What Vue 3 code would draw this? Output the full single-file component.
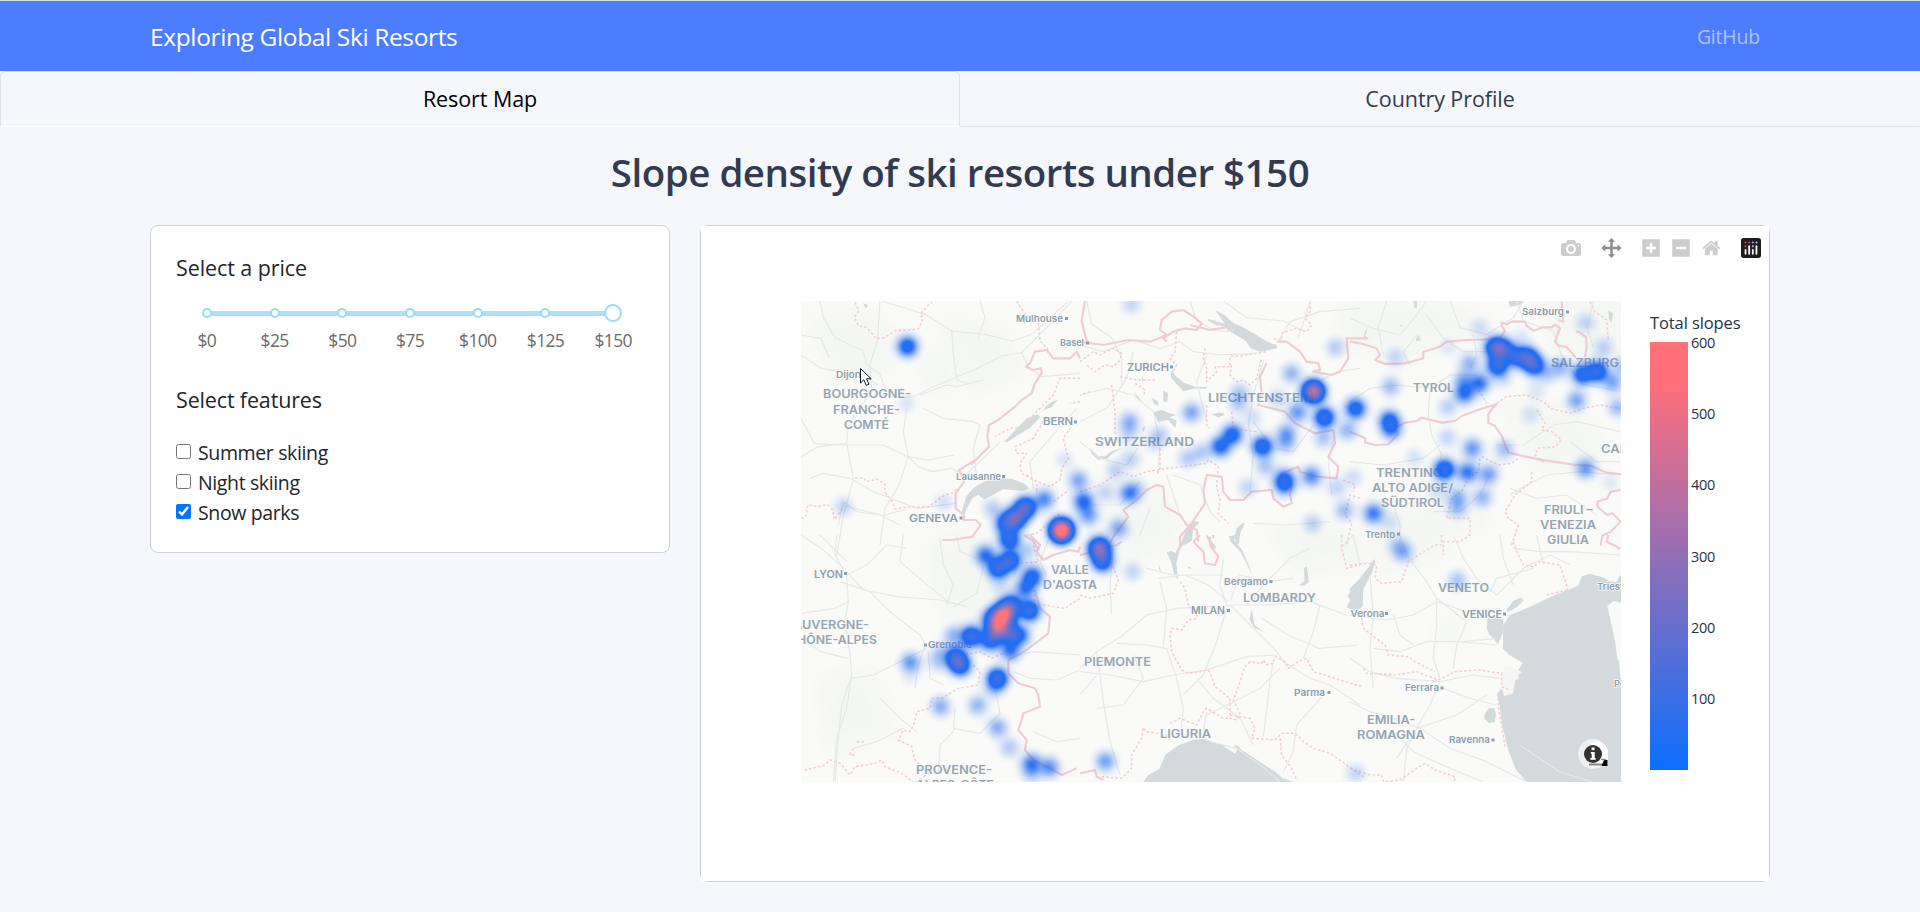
<script setup>
import { ref, onMounted } from 'vue'

const marks = ['$0', '$25', '$50', '$75', '$100', '$125', '$150']
const features = [
  { name: 'Summer skiing', on: false },
  { name: 'Night skiing', on: false },
  { name: 'Snow parks', on: true }
]
const ticks = [600, 500, 400, 300, 200, 100]

// [text, left, baseline, width]
const regions = [
  ['BOURGOGNE-', 22, 97, 88], ['FRANCHE-', 32, 112.5, 67], ['COMTÉ', 43, 128, 45],
  ['LIECHTENSTEIN', 407, 101, 106], ['SWITZERLAND', 294, 145, 99], ['TYROL', 612, 90.5, 41],
  ['SALZBURG', 750, 65.5, 68], ['CARINTHIA', 800, 151.5, 72], ['TRENTINO', 575, 175.5, 67],
  ['ALTO ADIGE/', 571, 191, 81], ['SÜDTIROL', 580, 206, 63], ['FRIULI –', 743, 212.5, 49],
  ['VENEZIA', 739, 228, 56], ['GIULIA', 746, 243, 42], ['AUVERGNE-', -8, 327.5, 76],
  ['RHÔNE-ALPES', -12, 343, 88], ['VALLE', 250, 272.5, 38], ["D'AOSTA", 242, 288, 54],
  ['PROVENCE-', 115, 472.5, 76], ['ALPES-CÔTE', 115, 487.5, 78], ['PIEMONTE', 283, 364.5, 67],
  ['LOMBARDY', 442, 301, 73], ['LIGURIA', 359, 436.5, 51], ['VENETO', 637, 291, 51],
  ['EMILIA-', 566, 422.5, 48], ['ROMAGNA', 556, 438, 68]
]
const capitals = [
  ['BERN', 242, 124, 30], ['GENEVA', 108, 221, 49], ['ZURICH', 326, 69.5, 42],
  ['LYON', 13, 276.5, 29], ['MILAN', 390, 313, 34], ['VENICE', 661, 316.5, 40]
]
const towns = [
  ['Mulhouse', 215, 20.5, 47], ['Basel', 259, 45, 24], ['Dijon', 35, 77, 25],
  ['Lausanne', 155, 178.5, 45], ['Salzburg', 721, 14, 42], ['Trento', 564, 236.5, 30],
  ['Grenoble', 127, 347, 44], ['Bergamo', 423, 283.5, 44], ['Parma', 493, 394.5, 31],
  ['Verona', 549.5, 315.5, 34], ['Trieste', 796, 289, 32], ['Ferrara', 604, 390, 34],
  ['Poreč', 813, 386, 26], ['Ravenna', 648, 442, 41]
]
const dots = [
  [265.5, 17.5], [286.5, 42], [274.5, 121], [202.5, 175.5], [160, 217], [370.5, 66],
  [766.5, 11], [597.5, 233], [44.5, 272.5], [124.5, 344], [427.5, 309.5], [470, 280.5],
  [528, 391.5], [585.5, 312.5], [703.5, 313], [641, 387], [692, 439]
]

// [x, y, weight] of each resort cluster on the map
const resorts = [
  [106, 45, .25], [105, 102, .03], [42, 205, .05], [142, 201, .035], [263, 158, .03], [243, 198, .15],
  [191, 207, .06], [224, 206, .42], [214, 217, .46], [204, 222, .26], [208, 238, .3], [260, 229, 1.2],
  [277, 179, .11], [330, 3, .05], [390, 111, .11], [328, 120, .09], [327, 131, .05], [358, 134, .06],
  [351, 142, .03], [438, 91, .06], [437, 102, .06], [451, 116, .04], [476, 97, .05], [490, 72, .09],
  [512, 90, .74], [496, 111, .13], [523, 116, .32], [554, 107, .26], [485, 132, .11], [484, 142, .08],
  [522, 137, .07], [546, 129, .09], [534, 46, .06], [431, 133, .24], [419, 145, .22], [400, 151, .06],
  [386, 157, .06], [461, 145, .29], [464, 165, .07], [483, 178, .2], [483, 184, .14], [510, 175, .15],
  [446, 186, .05], [535, 186, .05], [552, 176, .04], [543, 209, .08], [511, 222, .055], [329, 158, .055],
  [314, 169, .055], [328, 192, .16], [336, 187, .04], [304, 191, .05], [282, 200, .2], [287, 214, .12],
  [317, 227, .11], [298, 247, .58], [301, 260, .3], [331, 270, .05], [304, 460, .12], [554, 472, .05],
  [594, 56, .05], [678, 26, .04], [647, 46, .025], [589, 85, .08], [588, 119, .22], [590, 128, .15],
  [694, 46, .36], [702, 48, .28], [696, 64, .32], [714, 55, .24], [726, 56, .34], [733, 64, .28], [720, 36, .03],
  [668, 62, .09], [662, 79, .1], [678, 82, .18], [663, 92, .19], [701, 77, .04], [646, 106, .055],
  [759, 66, .09], [746, 72, .06], [781, 73, .26], [796, 70, .3], [811, 81, .11], [775, 99, .11],
  [802, 46, .055], [784, 21, .05], [816, 106, .08], [821, 65, .07], [735, 89, .03], [729, 113, .035],
  [646, 136, .05], [671, 147, .13], [703, 148, .08], [613, 156, .035], [643, 168, .32], [666, 171, .18],
  [687, 173, .12], [656, 196, .09], [656, 207, .07], [681, 196, .09], [637, 190, .035], [784, 167, .13],
  [572, 212, .17], [589, 221, .035], [809, 181, .025], [596, 244, .06], [602, 251, .09], [656, 279, .07],
  [184, 254, .19], [196, 267, .28], [209, 259, .3], [203, 264, .06], [226, 249, .06], [199, 284, .035],
  [231, 275, .24], [224, 287, .18], [228, 309, .34], [199, 316, .66], [196, 327, .62], [205, 311, .5],
  [210, 303, .26], [189, 317, .14], [189, 339, .26], [209, 332, .3], [219, 334, .16], [209, 349, .18],
  [170, 335, .34], [152, 334, .09], [154, 356, .32], [159, 364, .3], [138, 351, .05], [136, 361, .05],
  [109, 361, .13], [109, 376, .02], [196, 377, .34], [192, 387, .06], [139, 405, .1], [176, 404, .09],
  [196, 426, .1], [208, 446, .065], [230, 462, .16], [248, 466, .14], [230, 472, .06]
]

const W = 820
const H = 481
const heat = ref(null)

// Sums a gaussian kernel per resort, then colours the density blue to red.
onMounted(() => {
  const field = new Float32Array(W * H)
  const R = 21
  for (const [cx, cy, w] of resorts) {
    for (let y = Math.max(0, cy - R); y < Math.min(H, cy + R + 1); y++) {
      for (let x = Math.max(0, cx - R); x < Math.min(W, cx + R + 1); x++) {
        const r2 = (x - cx) ** 2 + (y - cy) ** 2
        field[y * W + x] += w * Math.exp(-r2 / 92)
      }
    }
  }
  const ctx = heat.value.getContext('2d')
  const img = ctx.createImageData(W, H)
  for (let i = 0; i < field.length; i++) {
    const d = field[i]
    const t = Math.max(0, Math.min(1, (d - 0.27) / 0.7))
    img.data[i * 4] = 20 + 235 * t
    img.data[i * 4 + 1] = 98 + 8 * t
    img.data[i * 4 + 2] = 240 - 127 * t
    img.data[i * 4 + 3] = 236 * Math.max(0, Math.min(1, (d - 0.004) / 0.19))
  }
  ctx.putImageData(img, 0, 0)
})
</script>

<template>
  <div class="page">
    <header class="navbar">
      <span class="brand">Exploring Global Ski Resorts</span>
      <a class="github">GitHub</a>
    </header>

    <nav class="tabs">
      <a class="tab active"><span>Resort Map</span></a>
      <a class="tab"><span>Country Profile</span></a>
    </nav>

    <h1><span>Slope density of ski resorts under $150</span></h1>

    <main class="columns">
      <section class="card controls">
        <h2 class="h-price"><span>Select a price</span></h2>
        <div class="slider">
          <div class="rail"></div>
          <div v-for="(m, i) in marks" :key="m" class="mark">
            <i :class="i === 6 ? 'handle' : 'dot'"></i>
            <span>{{ m }}</span>
          </div>
        </div>
        <h2 class="h-features"><span>Select features</span></h2>
        <label v-for="f in features" :key="f.name" class="feature">
          <input type="checkbox" :checked="f.on" /><span>{{ f.name }}</span>
        </label>
      </section>

      <section class="card chart">
        <div class="plot">
          <div class="modebar">
            <svg class="cam" viewBox="0 0 1000 1000"><path transform="matrix(1 0 0 -1 0 850)" d="m500 450c-83 0-150-67-150-150 0-83 67-150 150-150 83 0 150 67 150 150 0 83-67 150-150 150z m400 150h-120c-16 0-34 13-39 29l-31 93c-6 15-23 28-40 28h-340c-16 0-34-13-39-28l-31-94c-6-15-23-28-40-28h-120c-55 0-100-45-100-100v-450c0-55 45-100 100-100h800c55 0 100 45 100 100v450c0 55-45 100-100 100z m-400-550c-138 0-250 112-250 250 0 138 112 250 250 250 138 0 250-112 250-250 0-138-112-250-250-250z m365 380c-19 0-35 16-35 35 0 19 16 35 35 35 19 0 35-16 35-35 0-19-16-35-35-35z" /></svg>
            <svg class="pan" viewBox="0 0 1000 1000"><path transform="matrix(1 0 0 -1 0 850)" d="m1000 350l-187 188 0-125-250 0 0 250 125 0-188 187-187-187 125 0 0-250-250 0 0 125-188-188 186-187 0 125 252 0 0-250-125 0 187-188 188 188-125 0 0 250 250 0 0-126 187 188z" /></svg>
            <svg class="plus" viewBox="0 0 875 1000"><path transform="matrix(1 0 0 -1 0 850)" d="m1 787l0-875 875 0 0 875-875 0z m687-500l-187 0 0-187-125 0 0 187-188 0 0 125 188 0 0 187 125 0 0-187 187 0 0-125z" /></svg>
            <svg class="minus" viewBox="0 0 875 1000"><path transform="matrix(1 0 0 -1 0 850)" d="m0 788l0-876 875 0 0 876-875 0z m688-500l-500 0 0 125 500 0 0-125z" /></svg>
            <svg class="home" viewBox="0 0 928.6 1000"><path transform="matrix(1 0 0 -1 0 850)" d="m786 296v-267q0-15-11-26t-25-10h-214v214h-143v-214h-214q-15 0-25 10t-11 26v267q0 1 0 2t0 2l321 264 321-264q1-1 1-4z m124 39l-34-41q-5-5-12-6h-2q-7 0-12 3l-386 322-386-322q-7-4-13-4-7 2-12 7l-35 41q-4 5-3 13t6 12l401 334q18 15 42 15t43-15l136-114v109q0 8 5 13t13 5h107q8 0 13-5t5-13v-227l122-102q5-5 6-12t-4-13z" /></svg>
            <svg class="logo" viewBox="0 0 132 132">
              <rect width="132" height="132" rx="18" fill="#1d1d1d" />
              <g fill="#e8336d"><circle cx="30" cy="30" r="7" /><circle cx="54" cy="30" r="7" /><circle cx="30" cy="54" r="7" /></g>
              <circle cx="78" cy="30" r="7" fill="#b9a4dd" /><circle cx="102" cy="30" r="7" fill="#7ce0f5" /><circle cx="78" cy="54" r="7" fill="#b9a4dd" />
              <g fill="#fff"><rect x="24" y="72" width="12" height="38" rx="6" /><rect x="48" y="48" width="12" height="62" rx="6" /><rect x="72" y="72" width="12" height="38" rx="6" /><rect x="96" y="48" width="12" height="62" rx="6" /></g>
            </svg>
          </div>

          <div class="figure">
            <div class="map">
              <svg class="base" viewBox="0 0 820 481">
                <rect width="820" height="481" fill="#fafaf8" />

                <!-- parkland tint -->
                <g class="parks">
                  <path d="M10 20l50-10 40 25-20 40-45 5zM140 20l60 10 20 40-50 20zM120 60l25-10 10 30-25 15zM545 5l90-5 60 25-90 30-70-10zM700 100l80 10 30 50-70 10zM130 240l50-10 40 60-60 40-30-40zM560 200l60 10 30 40-70 20zM600 160l90 60-60 20zM300 200l60-10 20 50-60 20zM20 380l50-10 20 60-60 20zM470 230l70-10 30 40-70 10zM740 0l80 0 0 60-60-10zM640 320l20 0 0 20-20 0z" />
                </g>

                <!-- water -->
                <g fill="#d4dadc">
                  <g transform="translate(279 -6) scale(.33333)">
                    <path d="M405 44l28 16 28 25 25 10 38 22 36 22 30 12 2 8-22 6-30 5-28-10-14-22-30-18-25-14-5-10-30-6-25-14 2-4 50 14z" />
                    <path d="M275 225l12 18 25 20 40 14 28-2-2 6-40 0-28 8-20-22-18-20zM250 285l14 10-2 25-12 0zM220 352l25-8 20 10 25 5-22 8 22 10-4 22-22-24-30 6zM160 290l20 20 6 12-10-6zM30 460l12 10 14 14 20 0 15-14 35-12-34 22-10 12-28 2-20-18zM185 400l12-8-6 20zM215 308l18 10 3 16-14-8zM395 358l25-6 15 6-20 10zM322 700l22-22 15 4-20 20-3 35-22 13-6-20zM470 700l20-18 4 4-14 30-3 30-8 0-6-20zM185 240l5 14-3 10z" />
                  </g>
                  <g transform="translate(-1 -6) scale(.33333)">
                    <path d="M613 440l30-32 38-38 32-12 8 8-30 32-40 24-30 20zM735 336l18-14 20-8-18 22-24 10zM485 650l14-46 22-26 35-20 40-10 40 4 38 14 14 14-20 8-60-5-28 16-28 14-18-14-16 10-12 20-14 30zM512 508l20-14-18 18zM190 25l15 5-8 12z" />
                  </g>
                  <g transform="translate(549 -6) scale(.33333)">
                    <path d="M190 18l12 0-2 22-6 0zM475 18l45 0-10 12-30 5zM45 110l8-14-8 34-5 4zM198 130l8-10 6 16-14 2zM775 45l14 10-4 30-8-14zM152 86l6 8-6 2z" />
                  </g>
                  <g transform="translate(279 234) scale(.33333)">
                    <path d="M190 741l14-20 34-20 18-42 40-28 44-17 30-2 50 14 45 30 8-16-12-6 10-4 14 14 60 40 40 26 60 51zM315 0l12 14-26 25-12 45 5 48-10-6-10-44-14-30 14-4 12 6zM468 0l-6 16 24 28 22 50 8 26-14-30-20-38-30-32-6-16zM376 0l20 40 14 0-26-38zM672 98l8-4 4 24 2 22-12 12-18-1 18-14zM235 85l8 24-6-5zM320 92l16 8-10 1zM610 730l30 11-20 0zM515 220l8 50 30 22-30-14-14-24z" />
                    <path d="M840 140l0 80-22 8-18-12 12-22-10-12 18-20z" />
                  </g>
                  <g transform="translate(549 234) scale(.33333)">
                    <path d="M0 160l28-28 30-38 14-22 4 6-10 35-26 50-2 50-16 16-22-10z" />
                    <path d="M530 741l-34-40-25-68-14-60-8-60-8-35 14-20 30 2 20-20 0-35 14-22-40-22-20-20 0-70 20-30 60-25 80-38 42-16 24-10 10-28 26-8 40 12 18 10 20 4 10-20 30-4 0 120-38 16-8 24 12 70 6 80 28 34 0 380z" />
                    <path d="M470 225l20-28 25-10 5 10-20 20-25 15zM412 250l30-8 18 12-2 40-14 34-26-30-8-18zM402 540l14-20 16 0 6 18-4 24-18 2-12-12zM470 480l30-50 8 10-12 24-10 14z" />
                    <path fill="#fafaf8" d="M772 212l20-14 26 6 0 180-16-12-6-50z" />
                    <path fill="#f3f6f3" d="M465 392l50 18-18 20-8 45-26 8-12-30z" />
                  </g>
                </g>

                <!-- roads and rivers -->
                <g class="roads">
                  <g transform="translate(-1 -6) scale(.33333)">
                    <path d="M60 18l10 50 35 60 85 40 10 40 40 30 15 40 60 30 30-5 60-30 120-50 80-40 60-10 80-80 90-95M240 18l-8 120-22 70 5 80-70 100-5 55 20 110-30 110-20 120M3 180l60 40 60 10 70 10 40 30M3 370l40 75 95 5 110 0 75 35 60 10 80-15M3 485l50-30 85-10M320 340l-10 70 15 75-30 90-40 65-15 110M325 485l30 30 40 15 60-10 40 20M245 18l130 40 80 50 100 10 80 20 60-20 110-100M455 105l5 70 10 80 30 10M360 300l80-30 30 5 80-20M30 550l40-15 80 15 70 40 130 50 120-15M115 690l15-70 40 30 70 10 60 30M370 340l60 30 90 10 20 10M540 390l-20 70 10 90M665 175l20 40 40 30 115-10M600 440l-60 60-55 50M700 580l-10-80 60-70 80-90M3 120l60 10 25 60M540 18l15 50-20 60M130 632l120 30 70-20" />
                  </g>
                  <g transform="translate(279 -6) scale(.33333)">
                    <path d="M0 150l70 20 90-35 80 25 60-20 40 30 80 10 100-5M20 18l15 70 60 40 30 60 0 80M330 18l20 60 60 30 50 0M600 130l30-50 90-30 120-10M160 170l-20 80-60 90-80 40M0 300l80-20 80 20 60 50 20 90-5 80M550 200l-30 100-15 90 15 90-10 110M380 180l-30 80 30 120M0 440l60 50 80 20 40-60M280 540l80 30 30 80 30 30M690 18l-15 50-20 60M840 220l-70 10-90 50-60 90M0 630l120 0 60-70M520 685l100 5 130-10M600 330l120-60M520 380l60 80 60 10 60-80M755 600l-10-100 20-90M210 640l-30 80M260 540l40 120M430 18l70 50 110 10 60 30" />
                  </g>
                  <g transform="translate(549 -6) scale(.33333)">
                    <path d="M0 70l70 30 80 20 50-60 30-42M110 18l-25 80 15 80M230 60l50 70 60 40 90 0M300 18l30 80 80 20 80-50 30-50M0 320l60-40 80-10 100 10 60-40 80 0M240 280l-5 80 10 60 30 60-20 60 80 60M0 500l100 10 120-20 50-40M500 18l20 60 90 30 30 90 60 70 110 20M440 450l80 0 90-60 70-10 130 30M480 580l80 30 90-10 90 60M730 18l-20 80 20 60M130 630l20 60 0 60M250 650l80 0 60-50 30-60M660 440l80 60 70 0M370 120l10 60-20 40M480 600l50-30 60-30 100-10 110 10M200 120l-40 50 20 40" />
                  </g>
                  <g transform="translate(-1 234) scale(.33333)">
                    <path d="M110 0l-5 60 35 60 5 80-40 20-100 15M140 110l50 55 100 20 130 10 80 20M140 120l60-30 60-60 60 10M60 0l80 80M3 0l60 40 70 60M120 140l90 30 60 60 90 70 20 40M145 200l-10 60 15 100 5 60-30 90-10 100-10 130M155 420l-15 100-30 90-10 130M375 330l-20 60-10 70M380 340l-80 40-80 40-65 10M440 210l20-60-30-60-10-80M460 215l70-40 20-80M310 0l-10 80 70 60 80 65M470 0l10 50 50 20M3 310l60 40 80 20M385 350l5 80 40 20M240 490l60 60 50 40M465 520l-5 70-40 40-5 80M460 580l80 15 60-60-20-100M640 410l50 20 80 5 70-30M620 370l80-20 140 10M160 640l70-20 80-40M750 0l-30 80 20 40M700 590l70 30 70-10" />
                  </g>
                  <g transform="translate(279 234) scale(.33333)">
                    <path d="M0 400l50-50 80-50 70-60 90-20 170-10 100 0 130-10 110 40M100 18l-10 140 5 80M50 350l10 70 10 80 20 120 30 100M0 410l90 10 100 20 90-20 100-15 30-10 90-30 90-5M110 325l90 5 60 10 30 90 20 90-10 90M240 140l20 80-10 120M440 210l-20-60 10-80M450 210l60 60 80 80 20 30 80 50 60 20 90 60M440 220l-30 100-40 100-60 60M445 200l-60-50-70-30-80 10M720 210l-20 80-30 80M580 375l-10 60-10 90-10 80M600 400l-60 60-80 40-80 40M160 360l30 70-60 80-80 10M500 210l50-60 80-80 60-30M545 250l80 50 90 40 120-10M740 470l-90 100-10 80-30 60M200 100l80 20 150 0M0 480l50-60M380 530l-10 60 10 30M390 620l80 20 70 50 60 50M820 0l-40 40M350 430l50 60 80 60 40 80M450 200l30-80 80 20 80-10" />
                  </g>
                  <g transform="translate(549 234) scale(.33333)">
                    <path d="M0 240l110 15 80-15 70-40 90 30 100-10M150 0l20 60 60 80 30 50 90 70-30 70-10 70M440 180l-60-50-40-60-30-70M440 180l80-80 80-40 60 30M60 120l10 120-10 100 10 120M70 340l80 10 80-30 90 0 120 10M0 370l60 40 80 20 130 10 100-20 80 10M270 440l-30 70-40 70-60 90M280 460l80 30 80 20M0 500l60 30 70 20 80 30 90 60 110 40 120 60M130 590l60 60 110 50 100 41M200 580l120-40 90-60M340 320l100-10M450 0l10 70 30 80M490 40l80 10 90 0 150 10M260 190l0 80-10 100 20 60M130 240l20 60 40 30M10 0l20 90M730 741l-100-30-120-80M560 0l20 90M160 741l10-100 30-60M420 170l20-40 110-30" />
                  </g>
                </g>

                <!-- regional borders -->
                <g class="dashed">
                  <g transform="translate(-1 -6) scale(.33333)">
                    <path d="M165 22l12 25-14 20 12 25 25 5 30 35 25-5 30-20 70-5 15-30-8-15 20-25 15-10M165 550l25-2 10 12 30-8 25 15 0 25 20 25 10 25 30-5 70-2 50-35 20-5 20-15M3 670l15-5 5-35 30 5 30-6 15 15 5 30 15-20 10-15M840 250l-60 0-20 50-60 60-20 35-50 5-45 25M650 18l25 40 40 20 5 60 25 25M800 370l-70 10-30 50-55 25 5 20 30 0-20 30 5 30 35 20 50 20 30-20 5-35 20-30-15-60 20-30M840 320l-30 5M680 540l30 20 0 30M800 590l-40 30M680 720l30-5 70-60" />
                  </g>
                  <g transform="translate(279 -6) scale(.33333)">
                    <path d="M0 200l40-30 20 10 40-20 25 15-5 20-20 20-25-5-30 20-25-20M120 245l50 10 55 0M165 265l30 20-5 20M30 290l-30 10M95 270l10 80 0 80 20 20M290 110l-5 60-15 20 20 20-20 35M375 160l-5 30 10 30 0 40 30-30-5-15 30 0 15 0 0-30 50-5 60-10M455 210l-5 30 20 20 20-5 20 15 20-20 15-60M380 330l0 60 10 10M455 350l5 50 70 10M240 460l0 60-10 20M0 590l60-20 60-40 40 15 40-15 60-10 50-5 70-10 5-10 30 20-5 60 10 40-5 40 30 30M690 20l0 30-15 20 20 20-15 20-35-10-40 15 0 20-30-5M840 610l-30-10-15 60 20 25-15 65M790 555l35 15-5 20" />
                  </g>
                  <g transform="translate(549 -6) scale(.33333)">
                    <path d="M385 285l25 40M440 325l30-20 60-5 50 20 20 20 60 15 40-15 50-10 60 10M560 345l25 40-10 20 30 5 30 25-20 20-50 5-10 20 30 25M395 485l50 25 40-5 20-15M390 490l-5 40-30 20-20 40-30 20-15 60 70 0 0 50-30 20-50 0 0 40M545 530l0 30-50 40-30 50 10 20 30 20-20 60M720 20l15 30 35 25 5 60" />
                  </g>
                  <g transform="translate(-1 234) scale(.33333)">
                    <path d="M700 150l5 60 30 0 60 10 45-30M700 30l15 50-60 5-15 40M620 350l-45 20-35-20-50 10M520 390l20 20-5 40-60 10-50 30-30 0-5 30-40 10-5 30-15 30-20-5-15 30 40 20 10 40 40 40-40 30-40-30-50-20-10-20-20 10-60 10-15 25-30-35-30-10-15 15-60 15M160 640l-10 20 20 0M170 620l25 0" />
                  </g>
                  <g transform="translate(279 234) scale(.33333)">
                    <path d="M0 180l30 10 70-15 15-40-20-50 5-50M300 140l15 20 10 50 25 30 0 10-25 5-20 30-30-5-5 20 5 50 30 55 20 10 60-10 10 20 10 30 45 35 0 60 20 5 10-20-20-40 15-40 20-60 15-15 35 5 5-10 10 15 20-5 5-20 30 15 10 20 30-20 25-10 20 40 50 15 60 20 40 10M270 565l30-15 50 20 20-40 10-10 50 30 20 0M450 540l60 10 15 30-10 30 70 5 20-20 40 0 25 25 30 20 50 15 100 70M600 610l5 50 30 40 15 35M190 580l10 10 60 10M190 580l-5 30-30 50 0 40-30 30-60-5M785 0l0 40 15 60 40-10" />
                  </g>
                  <g transform="translate(549 234) scale(.33333)">
                    <path d="M0 90l60-5 20 5-5 40 20 15 60-5 20-60 80-50 20 0 0-30 0 0M35 250l5 30 65 50 10 30 60 5 20 15 60 30M40 400l10 15 90 5 60-10 65 25 50-25 70-5 70 10 0 40 25 10M490 20l10 30 20 40 30 5 20-15 60 10 20 60 5 25M445 475l0 40 10 60 10 60M0 700l60 20 35 0 5 20 50-5 50-35 25-15 30 20 60 20-5 40M590 180l60-15" />
                  </g>
                </g>

                <!-- national borders -->
                <g class="border">
                  <g transform="translate(-1 -6) scale(.33333)">
                    <path d="M840 190l-10-20-20 20-50 0-20-25-35 5-15 35-12 10 20 10 25-5 2 15-20 30-10 30-30 20-20 20-50 40-28 15-5 35 5 30-40 40-50 30 15 35-25 35 0 45 25 20 0 15 35 0 15 15-25 35-60 10-30 0M672 720l25 15 20 30" />
                  </g>
                  <g transform="translate(279 -6) scale(.33333)">
                    <path d="M0 140l70 10 75-15 65 5 50-20-20-15 5-30 30-25 35-5 30 20 25 20-15 20-35-5-35 10-30 20 10 10M330 90l60 15 60-10M590 140l30 0 40 30 20 30 35 5 5 20-20 5 55 10 25-10 25-40-5-60 65 0M560 205l-20 40 5 50-10 35 80 20 30 35 60 30 55-10 5 40-20 40 30 30-5 35-60-5-50-15-5-15-50 20-5 25 35 10-5 30 5 25-25 10-30-25-5-25-60 5-25 25-40 0-20-25-5-45-45-5-10 45 5 40-40 60-35 40 0 35M355 740l-5-35-30-15-20-30-45-25-5-60-20-5-30 15-30 30-40 30 15 20-30 40-15 20-10 20M15 18l-10 60 15 60" />
                  </g>
                  <g transform="translate(549 -6) scale(.33333)">
                    <path d="M0 140l30 5 50 15 10 20-15 15 30 12 60-2 20-5 35-10 0-20 50-15 20-15 60-5 70-2 30-5 15-20-10-15 0-10 15 5 15-8 40 0 5 12 20 15 30-10 25 0 10-8 15 10-15 40 10 12 25 5 30 35 20 10 5-15 5-30-2-30-20-14-10-3M0 410l45 20 0 12 30 8 40-2 30-30-10-20 30-15 35-5 15-10 60 15 40-5 20-15 55-20 50-15-15 15-10 15 0 25 20 10 20 30 20 50 90 20 100 15 60 5 45 20 45 5M812 585l-30 5-10 20-30 10 0 15 30 25 15-5 25 25-30 30-25 12-5 30M635 20l5 60-15-5" />
                  </g>
                  <g transform="translate(-1 234) scale(.33333)">
                    <path d="M690 0l30 30-10 20 20 25 30-15 50-15 25 5 5-15M705 165l15 55 30 25-5 50-65 50-55 30 0 40 30 30 50 15 10 20 5 35-50 20-5 20-10 30 25 30-5 30 25 30 40 20 45 25 45-20" />
                  </g>
                  <g transform="translate(279 234) scale(.33333)">
                    <path d="M0 60l60-15 50-15 15-10M340 20l20-20M340 20l30 30 5 35 30 5 10-25-25-35 0-25M400 0l0 10M0 715l45-10 5 20 20 10" />
                  </g>
                  <g transform="translate(549 234) scale(.33333)"><path d="M775 0l-5 20 25 12 15 10" /></g>
                </g>

                <g class="labels">
                  <g class="town">
                    <text v-for="l in towns" :key="l[0]" :x="l[1]" :y="l[2]" :textLength="l[3]" lengthAdjust="spacingAndGlyphs">{{ l[0] }}</text>
                  </g>
                  <g class="capital">
                    <text v-for="l in capitals" :key="l[0]" :x="l[1]" :y="l[2]" :textLength="l[3]" lengthAdjust="spacingAndGlyphs">{{ l[0] }}</text>
                  </g>
                  <g class="region">
                    <text v-for="l in regions" :key="l[0]" :x="l[1]" :y="l[2]" :textLength="l[3]" lengthAdjust="spacingAndGlyphs">{{ l[0] }}</text>
                  </g>
                  <rect v-for="(d, i) in dots" :key="i" :x="d[0] - 1.5" :y="d[1] - 1.5" width="3" height="3" />
                </g>
              </svg>

              <canvas ref="heat" class="heat" width="820" height="481"></canvas>

              <svg class="overlay" viewBox="0 0 820 481">
                <circle cx="792" cy="453" r="15" fill="#f4f6f6" opacity=".8" />
                <path d="M790 442.500a11 11 0 0 1 17 10l0 11h-2l-3 2h-13z" fill="#fff" />
                <path d="M788 463.500h16" stroke="#858585" stroke-width="2" />
                <path d="M803 459h3.500v6h-6z" fill="#000" />
                <path d="M800 458.500h5" stroke="#888" stroke-width="1.500" />
                <circle cx="792" cy="453" r="9" fill="#333" />
                <path d="M790.600 446.500h3v2.800h-3zM789.800 451h3.900v6h1v1.800h-5.400v-1.800h1.400v-4.200h-.9z" fill="#fff" />
                <path d="M59.500 67.500v14.500l3.300-3.200 2.500 5.600 2.700-1.200-2.500-5.400h4.700z" fill="#fff" stroke="#111827" stroke-width="1" />
              </svg>
            </div>

            <div class="colorbar">
              <div class="cb-title"><span>Total slopes</span></div>
              <div class="cb-body">
                <div class="ramp"></div>
                <div class="ticks"><span v-for="t in ticks" :key="t">{{ t }}</span></div>
              </div>
            </div>
          </div>
        </div>
      </section>
    </main>
  </div>
</template>

<style>
html, body { background: #f5f7fb; }
</style>

<style scoped>
.page {
  height: 912px;
  overflow: hidden;
  box-sizing: border-box;
  border-top: 1px solid #d5dade;
  background: #f5f7fb;
  color: #212529;
  font-family: "Open Sans", "Noto Sans", sans-serif;
}
h1, h2 { margin: 0; font-weight: 400; }
span { white-space: nowrap; }

.navbar {
  display: flex;
  justify-content: space-between;
  align-items: center;
  height: 70px;
  padding: 0 160px 0 150px;
  box-sizing: border-box;
  background: #4c7cff;
}
.brand { font-size: 24.500px; letter-spacing: -0.370px; color: #fff; line-height: 34px; padding-top: 1px; }
.github { font-size: 19.500px; letter-spacing: -0.200px; color: rgba(255, 255, 255, .55); }

.tabs { display: flex; height: 56px; }
.tab {
  flex: 1;
  box-sizing: border-box;
  border: 1px solid transparent;
  border-bottom-color: #dee2e6;
  text-align: center;
  font-size: 21.500px;
  line-height: 54px;
  letter-spacing: -0.080px;
  color: #323a52;
}
.tab.active {
  border-color: #dee2e6 #dee2e6 #fff;
  border-radius: 6px 6px 0 0;
  color: #000;
}

h1 {
  margin-top: 19px;
  height: 53px;
  line-height: 52px;
  text-align: center;
  font-size: 38.500px;
  font-weight: 600;
  letter-spacing: -0.500px;
  color: #323a52;
}

.columns { display: flex; align-items: flex-start; gap: 30px; margin: 26px 150px 0; }
.card { box-sizing: border-box; border: 1px solid #cfd1d5; border-radius: 8px; background: #fff; }
.controls { width: 520px; height: 328px; padding: 26px 25px 0; }
.controls h2 { font-size: 21.500px; line-height: 32px; letter-spacing: -0.080px; }
.controls .h-features { letter-spacing: -0.150px; }

.slider {
  position: relative;
  display: flex;
  height: 56px;
  margin: 19px -3px 0;
}
.rail { position: absolute; left: 34px; right: 34px; top: 8px; height: 5px; background: #abe2fb; }
.mark { position: relative; flex: 1; display: flex; flex-direction: column; align-items: center; }
.mark i { box-sizing: border-box; border: 2px solid #96dbfa; border-radius: 50%; background: #fff; }
.dot { width: 10px; height: 10px; margin: 5px 0; }
.handle { width: 18px; height: 18px; margin: 1px 0; }
.mark span { margin-top: 4px; font-size: 17.500px; line-height: 26px; letter-spacing: -0.700px; color: #6a6a6a; }
.h-features { margin-top: 25px; margin-bottom: 21px; }
.feature { display: flex; align-items: center; height: 30px; font-size: 19.500px; letter-spacing: -0.370px; }
.feature input { width: 15px; height: 15px; margin: 0 7px 1px 0; }

.chart { width: 1070px; height: 657px; }
.plot { height: 655px; box-sizing: border-box; background: #fff; padding: 12px 8px 0 100px; }
.modebar { display: flex; justify-content: flex-end; align-items: center; height: 20px; fill: #cdcdcd; }
.modebar svg { height: 20px; display: block; }
.cam { width: 20px; margin-right: 20px; }
.pan { width: 21px; fill: #8d8d8d; margin-right: 20px; }
.plus, .minus { width: 18px; margin-right: 12px; }
.home { width: 18.600px; margin-right: 20px; }
.logo { width: 20px; }

.figure { display: flex; gap: 29px; margin-top: 43px; }
.map { position: relative; width: 820px; height: 481px; flex: none; overflow: hidden; }
.map > * { position: absolute; left: 0; top: 0; width: 820px; height: 481px; display: block; }

.parks { fill: #f3f6f3; filter: blur(8px); }
.roads { fill: none; stroke: #e5e7e8; stroke-width: 3.500; stroke-linejoin: round; }
.dashed { fill: none; stroke: #f0cfd3; stroke-width: 4.500; stroke-dasharray: 8 6; stroke-linejoin: round; }
.border { fill: none; stroke: #f0cdd2; stroke-width: 6.500; stroke-linejoin: round; }
.labels { font-family: Inter, "Noto Sans", sans-serif; fill: #8e9dab; font-weight: 600; }
.labels text { paint-order: stroke; stroke: #fafaf8; stroke-width: 1.500px; }
.town { font-size: 9.200px; }
.capital { font-size: 10.300px; }
.region { font-size: 11.300px; fill: #97a5b1; }

.colorbar { width: 100px; }
.cb-title { height: 41px; padding-top: 10px; box-sizing: border-box; font-size: 16.500px; line-height: 24px; letter-spacing: -0.100px; color: #2a3145; }
.cb-body { display: flex; gap: 3px; }
.ramp {
  width: 38px;
  height: 428px;
  background: linear-gradient(to top, #0d6efd 0%, #ff6e7c 90%, #ff7277 100%);
}
.ticks {
  display: flex;
  flex-direction: column;
  justify-content: space-between;
  height: 376px;
  margin-top: -9px;
  font-size: 14.500px;
  line-height: 20px;
  letter-spacing: -0.300px;
  color: #2a3145;
}
</style>
